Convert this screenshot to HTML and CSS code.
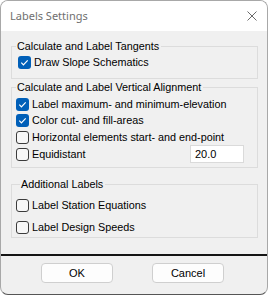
FILE: index.html
```html
<!DOCTYPE html>
<html>
<head>
<meta charset="utf-8">
<link rel="stylesheet" href="styles.css">
</head>
<body>
<div class="win">
  <div class="titlebar">
    <span class="title">Labels Settings</span>
    <svg class="close" width="10" height="10" viewBox="0 0 10 10"><path d="M0.5 0.5L9.5 9.5M9.5 0.5L0.5 9.5" stroke="#6a6a6a" stroke-width="1" fill="none"/></svg>
  </div>
  <div class="content">
    <fieldset class="grp g1">
      <legend>Calculate and Label Tangents</legend>
      <div class="row"><span class="cb on"><svg width="13" height="13" viewBox="0 0 13 13"><path d="M3.3 6.7L5.4 8.8L9.7 4.4" stroke="#fff" stroke-width="1.2" fill="none"/></svg></span>Draw Slope Schematics</div>
    </fieldset>
    <fieldset class="grp g2">
      <legend>Calculate and Label Vertical Alignment</legend>
      <div class="row"><span class="cb on"><svg width="13" height="13" viewBox="0 0 13 13"><path d="M3.3 6.7L5.4 8.8L9.7 4.4" stroke="#fff" stroke-width="1.2" fill="none"/></svg></span>Label maximum- and minimum-elevation</div>
      <div class="row"><span class="cb on"><svg width="13" height="13" viewBox="0 0 13 13"><path d="M3.3 6.7L5.4 8.8L9.7 4.4" stroke="#fff" stroke-width="1.2" fill="none"/></svg></span>Color cut- and fill-areas</div>
      <div class="row r3"><span class="cb"></span>Horizontal elements start- and end-point</div>
      <div class="row r4"><span class="cb"></span>Equidistant<span class="field">20.0</span></div>
    </fieldset>
    <fieldset class="grp g3">
      <legend>Additional Labels</legend>
      <div class="row"><span class="cb"></span>Label Station Equations</div>
      <div class="row"><span class="cb"></span>Label Design Speeds</div>
    </fieldset>
  </div>
  <div class="sep"></div>
  <div class="btns">
    <span class="btn">OK</span>
    <span class="btn">Cancel</span>
  </div>
</div>
</body>
</html>
```
FILE: styles.css
```css
html, body {
  margin: 0;
  padding: 0;
  background: #ffffff;
}
.win {
  box-sizing: border-box;
  width: 268px;
  height: 295px;
  background: #f0f0f0;
  border: 1px solid #a8a8a8;
  border-bottom-color: #555555;
  border-radius: 8px;
  overflow: hidden;
  font-family: "Liberation Sans", Arial, sans-serif;
  font-size: 10.8px;
  color: #000;
}
.titlebar {
  height: 30px;
  background: #ffffff;
  display: flex;
  align-items: center;
  justify-content: space-between;
  padding: 0 10px 0 9px;
}
.title {
  font-family: "Noto Sans", sans-serif;
  font-size: 11px;
  color: #6f6f6f;
  line-height: 30px;
}
.close {
  display: block;
}
.content {
  padding: 8px 9px 0 10px;
}
.grp {
  margin: 0;
  min-width: 0;
  border: 1px solid #dcdcdc;
  padding: 0 13px 0 4px;
}
.grp legend {
  padding: 0 2px 0 1px;
  line-height: 14px;
}
.g1 {
  padding-top: 1px;
  padding-bottom: 8px;
}
.g1 .row {
  margin-left: 2px;
}
.g2 {
  margin-top: 1px;
  padding-top: 2px;
  padding-bottom: 4px;
}
.g3 {
  margin-top: 9px;
  padding-top: 6px;
  padding-bottom: 2px;
  display: flex;
  flex-direction: column;
  gap: 6px;
}
.g3 legend {
  margin-left: 4px;
}
.row {
  display: flex;
  align-items: center;
  height: 16px;
  white-space: nowrap;
}
.r3 {
  margin-top: 1px;
}
.r4 {
  height: 18px;
}
.cb {
  box-sizing: border-box;
  width: 13px;
  height: 13px;
  border: 1px solid #3b3b3b;
  border-radius: 3px;
  background: #f7f7f7;
  margin-right: 3px;
  flex: none;
  display: flex;
  align-items: center;
  justify-content: center;
}
.cb.on {
  border: none;
  background: #005fb8;
}
.cb svg {
  display: block;
}
.field {
  box-sizing: border-box;
  margin-left: auto;
  width: 54px;
  height: 18px;
  background: #ffffff;
  border: 1px solid #dadada;
  padding-left: 4px;
  line-height: 16px;
  font-size: 11px;
}
.sep {
  margin-top: 16px;
  height: 2px;
  background: #141414;
}
.btns {
  display: flex;
  margin-top: 7px;
  padding-left: 40px;
  gap: 39px;
}
.btn {
  box-sizing: border-box;
  width: 72px;
  height: 20px;
  border: 1px solid #cfcfcf;
  border-radius: 4px;
  background: #fdfdfd;
  display: flex;
  align-items: center;
  justify-content: center;
  font-size: 11px;
}
```
